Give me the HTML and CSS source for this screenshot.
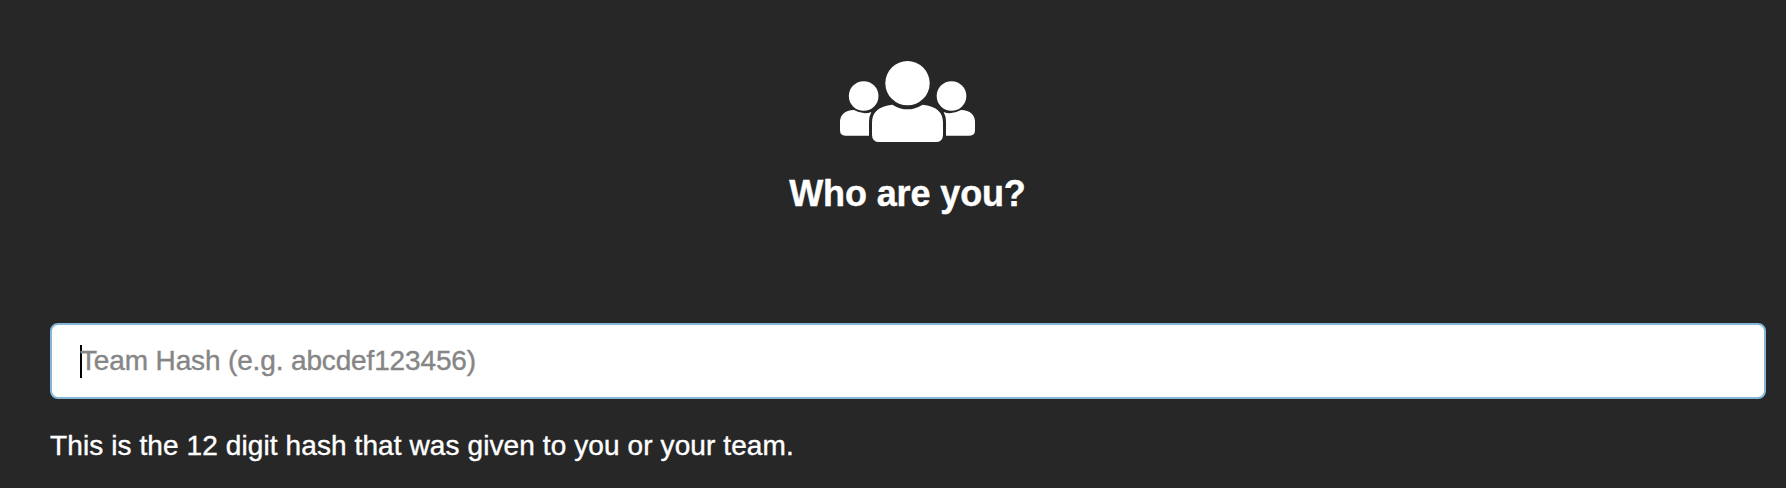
FILE: index.html
```html
<!DOCTYPE html>
<html lang="en">
<head>
<meta charset="utf-8">
<title>Who are you?</title>
<link rel="stylesheet" href="styles.css">
</head>
<body>
<main class="page">
  <header class="header">
    <svg class="users-icon" viewBox="60 60 405 246" aria-hidden="true">
      <circle cx="131" cy="168" r="44.5"/>
      <circle cx="394.500" cy="168" r="44.500"/>
      <circle cx="262.500" cy="129.500" r="66.500"/>
      <path d="M102 210 Q131 226 154 216 Q147 229 147 245 V287 H76 Q60 287 60 271 V247 Q60 212 102 210Z"/>
      <path d="M423 210 Q394 226 371 216 Q378 229 378 245 V287 H449 Q465 287 465 271 V247 Q465 212 423 210Z"/>
      <path d="M217 194 Q262 222 308 194 Q369 200 369 248 V284 Q369 306 347 306 H178 Q156 306 156 284 V248 Q156 200 217 194Z"/>
    </svg>
    <h1 class="title">Who are you?</h1>
  </header>
  <form class="form">
    <div class="field"><span class="caret"></span><span class="placeholder">Team Hash (e.g. abcdef123456)</span></div>
    <p class="hint">This is the 12 digit hash that was given to you or your team.</p>
  </form>
</main>
</body>
</html>
```
FILE: styles.css
```css
* { box-sizing: border-box; }
body {
  margin: 0;
  background: #272727;
  color: #fff;
  font-family: "Liberation Sans", Arial, sans-serif;
  overflow: hidden;
}
.page { height: 488px; padding: 60px 20px 0 50px; }
.header {
  display: flex;
  flex-direction: column;
  align-items: center;
  height: 263px;
  padding-right: 1px;
}
.users-icon { width: 135px; height: 82px; fill: #fff; }
.title {
  margin: 30px 0 0;
  font-size: 36px;
  line-height: 44px;
  font-weight: 700;
  letter-spacing: -0.13px;
  -webkit-text-stroke: 0.4px #fff;
  white-space: nowrap;
}
.form { margin: 0; }
.field {
  display: flex;
  align-items: center;
  height: 76px;
  padding-left: 28px;
  border: 2px solid #85b7d9;
  border-radius: 8px;
  background: #fff;
  color: #868686;
  font-size: 28px;
}
.caret { width: 2px; height: 33px; margin-right: -2px; background: #000; }
.placeholder {
  line-height: 32px;
  letter-spacing: -0.14px;
  -webkit-text-stroke: 0.4px #868686;
  white-space: nowrap;
}
.hint {
  margin: 31px 0 0;
  font-size: 28px;
  line-height: 32px;
  letter-spacing: 0.1px;
  -webkit-text-stroke: 0.4px #fff;
  white-space: nowrap;
}
```
